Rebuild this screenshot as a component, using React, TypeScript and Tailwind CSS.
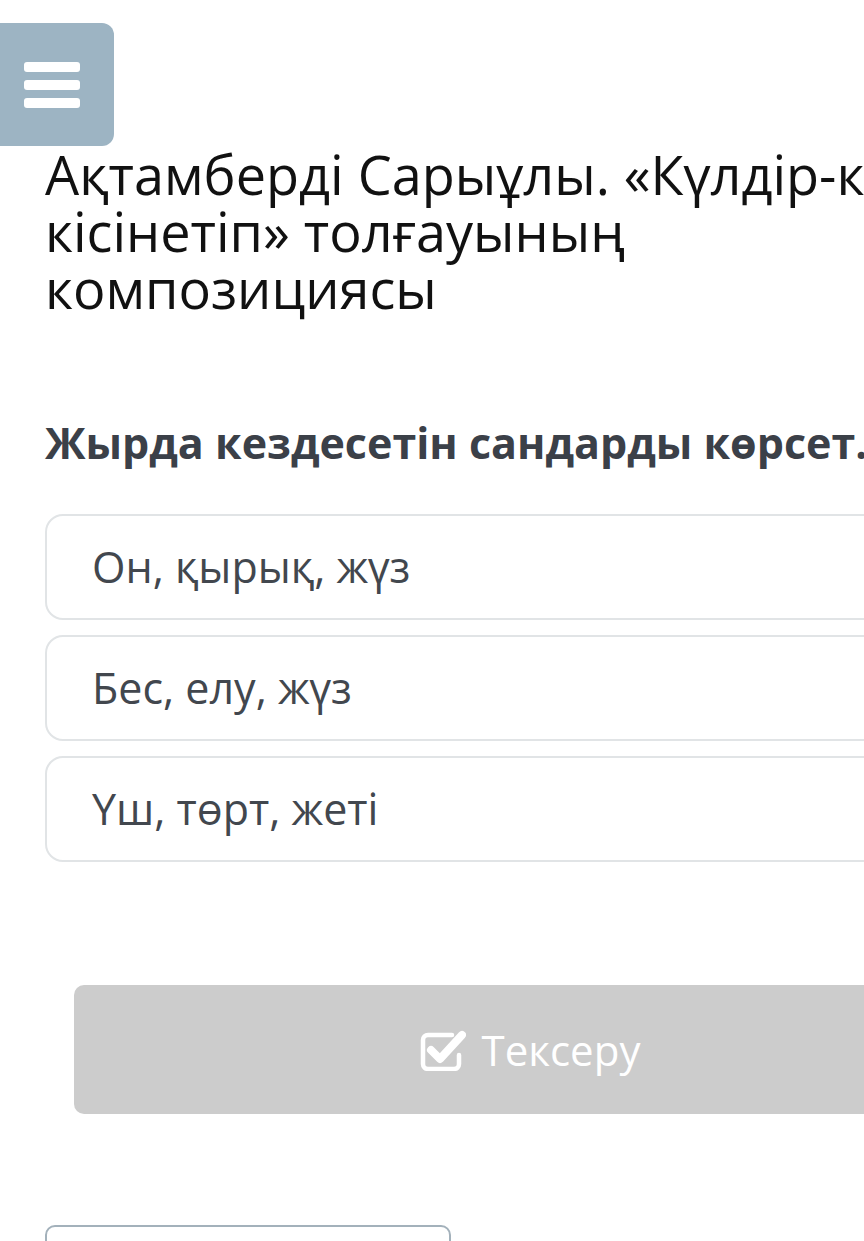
import React from 'react';

const options = ['Он, қырық, жүз', 'Бес, елу, жүз', 'Үш, төрт, жеті'];

function CheckSquareIcon() {
  return (
    <svg width="46" height="42" viewBox="0 0 46 42" fill="none">
      <path
        d="M32 6H8a5 5 0 0 0-5 5v24a5 5 0 0 0 5 5h26a5 5 0 0 0 5-5V26"
        stroke="white"
        strokeWidth="4.5"
        strokeLinecap="round"
        strokeLinejoin="round"
      />
      <path
        d="M11 21l9 9L42 6"
        stroke="white"
        strokeWidth="8"
        strokeLinecap="round"
        strokeLinejoin="round"
      />
    </svg>
  );
}

export default function App() {
  return (
    <div
      className="w-[864px] h-[1241px] overflow-hidden bg-white"
      style={{ fontFamily: '"Open Sans", "Noto Sans", sans-serif' }}
    >
      <div className="w-[1060px]">
        {/* menu button */}
        <div className="pt-[23px]">
          <div className="-ml-[16px] w-[130px] h-[123px] rounded-[12px] bg-[#9db4c3] flex flex-col justify-center gap-[8px] pl-[40px]">
            <span className="block w-[56px] h-[10px] rounded-[3px] bg-white" />
            <span className="block w-[56px] h-[10px] rounded-[3px] bg-white" />
            <span className="block w-[56px] h-[10px] rounded-[3px] bg-white" />
          </div>
        </div>

        <div className="px-[45px]">
          <h1 className="text-[54px] leading-[57px] font-normal text-[#111] whitespace-nowrap">
            Ақтамберді Сарыұлы. «Күлдір-күлдір
            <br />
            кісінетіп» толғауының
            <br />
            композициясы
          </h1>

          <h2 className="mt-[101px] text-[43px] leading-[50px] font-bold text-[#3b4048] whitespace-nowrap">
            Жырда кездесетін сандарды көрсет.
          </h2>

          <div className="mt-[46px] flex flex-col gap-[15px]">
            {options.map((o) => (
              <div
                key={o}
                className="h-[106px] rounded-[18px] border-2 border-[#e1e4e6] flex items-center pl-[45px] text-[43px] text-[#42474e]"
              >
                {o}
              </div>
            ))}
          </div>

          <div className="mt-[123px] mx-[29px] h-[129px] rounded-[10px] bg-[#cccccc] flex items-center justify-center gap-[16px] text-white text-[42px]">
            <CheckSquareIcon />
            <span>Тексеру</span>
          </div>

          <div className="mt-[111px] w-[406px] h-[80px] rounded-[10px] border-2 border-[#a3b1bb]" />
        </div>
      </div>
    </div>
  );
}
